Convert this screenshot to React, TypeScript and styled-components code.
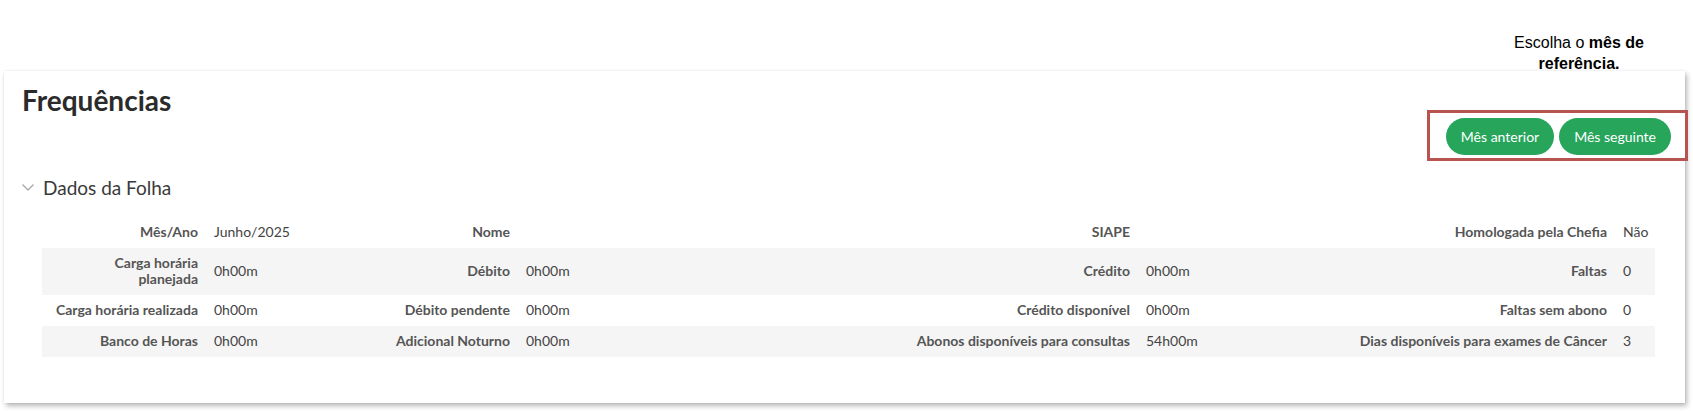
import styled, { createGlobalStyle } from "styled-components";

const GlobalStyle = createGlobalStyle`
  html, body {
    margin: 0;
    padding: 0;
    background: #fff;
  }
  body {
    font-family: Lato, "Open Sans", sans-serif;
    color: #333;
  }
`;

const Page = styled.div`
  position: relative;
  padding: 71px 8px 8px 4px;
`;

const Hint = styled.div`
  position: absolute;
  top: 32px;
  left: 1504px;
  width: 150px;
  text-align: center;
  font-family: "Liberation Sans", Arial, sans-serif;
  font-size: 16px;
  line-height: 21px;
  color: #000;
  b {
    font-weight: bold;
  }
`;

const Highlight = styled.div`
  position: absolute;
  top: 110px;
  left: 1427px;
  width: 261px;
  height: 51px;
  box-sizing: border-box;
  border: 3px solid #b85450;
  pointer-events: none;
`;

const Card = styled.section`
  background: #fff;
  box-shadow: 0 0 2px rgba(0, 0, 0, 0.08), 2px 3px 5px rgba(0, 0, 0, 0.28);
  padding: 13px 14px 46px 18px;
  height: 332px;
  box-sizing: border-box;
`;

const Title = styled.h1`
  margin: 0;
  font-size: 28px;
  line-height: 33px;
  font-weight: 700;
  color: #2b2b2b;
`;

const Toolbar = styled.div`
  display: flex;
  justify-content: flex-end;
  gap: 5px;
  margin-top: 1px;
`;

const PillButton = styled.button`
  height: 37px;
  padding: 0 15px;
  border: none;
  border-radius: 19px;
  background: #26a55b;
  color: #fff;
  font-family: Lato, sans-serif;
  font-size: 14px;
  cursor: pointer;
`;

const SectionHeader = styled.div`
  display: flex;
  align-items: center;
  gap: 9px;
  margin-top: 21px;
  font-size: 19px;
  line-height: 23px;
  color: #3a3a3a;
`;

const Table = styled.table`
  margin: 18px 0 0 20px;
  width: 1613px;
  border-collapse: collapse;
  table-layout: fixed;
  font-size: 14px;
  line-height: 16px;

  tr:nth-child(even) {
    background: #f5f5f5;
  }
  th,
  td {
    padding-top: 7px;
    padding-bottom: 8px;
    vertical-align: middle;
  }
  th {
    padding-left: 0;
    padding-right: 8px;
    text-align: right;
    font-weight: 700;
    color: #555;
    white-space: nowrap;
  }
  td {
    padding-left: 8px;
    padding-right: 0;
    text-align: left;
    color: #444;
    white-space: nowrap;
  }
`;

const widths = [164, 180, 132, 388, 232, 210, 267, 40];

const rows: [React.ReactNode, string][][] = [
  [
    ["Mês/Ano", "Junho/2025"],
    ["Nome", ""],
    ["SIAPE", ""],
    ["Homologada pela Chefia", "Não"],
  ],
  [
    [
      <>
        Carga horária
        <br />
        planejada
      </>,
      "0h00m",
    ],
    ["Débito", "0h00m"],
    ["Crédito", "0h00m"],
    ["Faltas", "0"],
  ],
  [
    ["Carga horária realizada", "0h00m"],
    ["Débito pendente", "0h00m"],
    ["Crédito disponível", "0h00m"],
    ["Faltas sem abono", "0"],
  ],
  [
    ["Banco de Horas", "0h00m"],
    ["Adicional Noturno", "0h00m"],
    ["Abonos disponíveis para consultas", "54h00m"],
    ["Dias disponíveis para exames de Câncer", "3"],
  ],
];

export default function App() {
  return (
    <Page>
      <GlobalStyle />
      <Card>
        <Title>Frequências</Title>
        <Toolbar>
          <PillButton>Mês anterior</PillButton>
          <PillButton>Mês seguinte</PillButton>
        </Toolbar>
        <SectionHeader>
          <svg width="12" height="7" viewBox="0 0 12 7">
            <polyline
              points="0.5,0.5 6,6 11.5,0.5"
              fill="none"
              stroke="#a8a8a8"
              strokeWidth="1.3"
            />
          </svg>
          Dados da Folha
        </SectionHeader>
        <Table>
          <colgroup>
            {widths.map((w, i) => (
              <col key={i} style={{ width: w }} />
            ))}
          </colgroup>
          <tbody>
            {rows.map((row, r) => (
              <tr key={r}>
                {row.map(([label, value], c) => [
                  <th key={`l${c}`}>{label}</th>,
                  <td key={`v${c}`}>{value}</td>,
                ])}
              </tr>
            ))}
          </tbody>
        </Table>
      </Card>
      <Hint>
        Escolha o <b>mês de referência.</b>
      </Hint>
      <Highlight />
    </Page>
  );
}
